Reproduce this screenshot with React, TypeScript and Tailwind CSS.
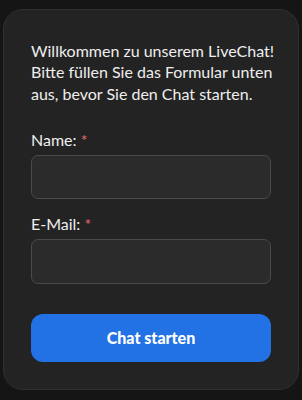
import React from "react";

export default function App() {
  return (
    <div className="min-h-[400px] w-[302px] bg-[#151515] pt-[9px] px-[3px]" style={{ fontFamily: 'Lato, "Noto Sans", sans-serif' }}>
      <div className="w-[296px] h-[381px] rounded-[20px] bg-[#232323] border border-[#303030] px-[27px] pt-[30px]">
        <p className="text-[16px] leading-[21.3px] text-[#eeeeee] whitespace-nowrap">
          Willkommen zu unserem LiveChat!
          <br />
          Bitte füllen Sie das Formular unten
          <br />
          aus, bevor Sie den Chat starten.
        </p>
        <label className="block mt-[25px] text-[16px] leading-[21px] text-[#eeeeee]">
          Name: <span className="text-[#e06c6c]">*</span>
        </label>
        <div className="mt-[5px] h-[44px] rounded-[7px] bg-[#2b2b2b] border border-[#4a4a4a]" />
        <label className="block mt-[14px] text-[16px] leading-[21px] text-[#eeeeee]">
          E-Mail: <span className="text-[#e06c6c]">*</span>
        </label>
        <div className="mt-[5px] h-[45px] rounded-[7px] bg-[#2b2b2b] border border-[#4a4a4a]" />
        <button className="mt-[30px] w-full h-[48px] rounded-[12px] bg-[#2272e6] text-white font-black text-[16px]">
          Chat starten
        </button>
      </div>
    </div>
  );
}
